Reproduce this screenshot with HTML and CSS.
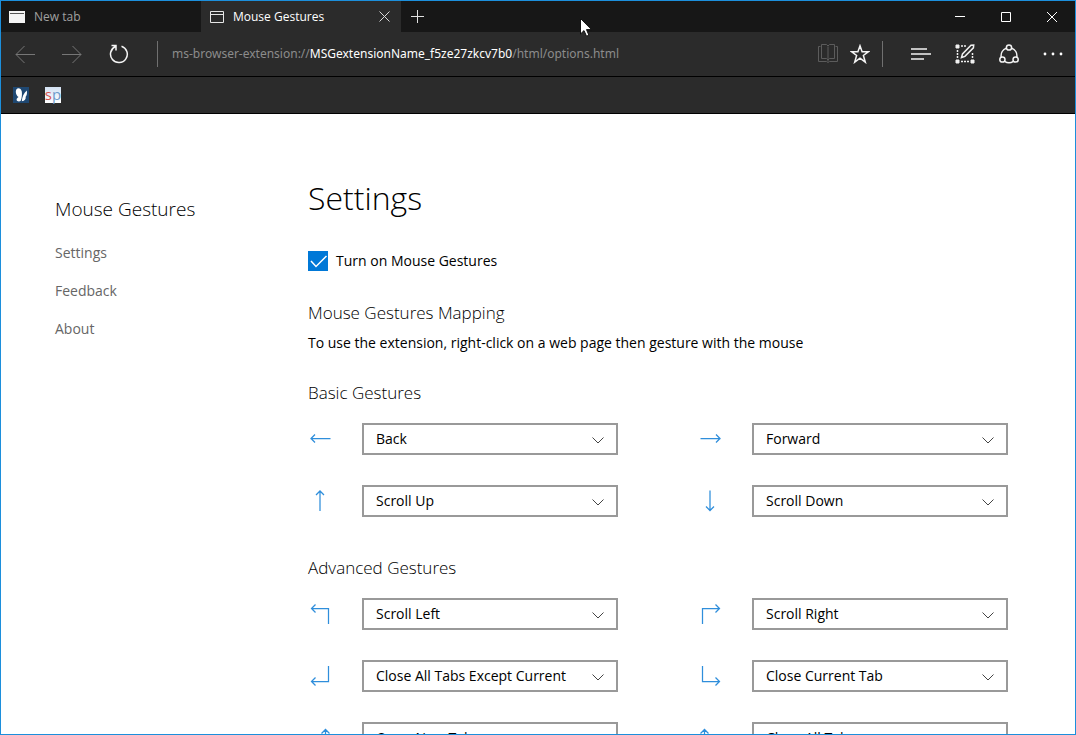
FILE: index.html
```html
<!DOCTYPE html>
<html lang="en">
<head>
<meta charset="utf-8">
<title>Mouse Gestures</title>
<link rel="stylesheet" href="styles.css">
</head>
<body>
<div class="window">
  <header class="tabbar">
    <button class="tab" type="button">
      <svg class="tab-icon" width="16" height="12" viewBox="0 0 16 12"><path fill="#f4f4f4" d="M0 0h16v12H0z"/><path stroke="#555" d="M1 2.5h14"/></svg>
      <span>New tab</span>
    </button>
    <div class="tab tab-active">
      <svg class="tab-icon" width="14" height="12" viewBox="0 0 14 12" fill="none" stroke="#e6e6e6"><path d="M.5.5h13v11H.5zM0 3.5h14"/></svg>
      <span>Mouse Gestures</span>
      <button class="icon-button tab-close" type="button" aria-label="Close tab">
        <svg width="11" height="11" viewBox="0 0 11 11" stroke="#d8d8d8"><path d="M.5.5l10 10M10.500.5l-10 10"/></svg>
      </button>
    </div>
    <button class="icon-button new-tab" type="button" aria-label="New tab">
      <svg width="13" height="13" viewBox="0 0 13 13" stroke="#e0e0e0"><path d="M6.500 0v13M0 6.500h13"/></svg>
    </button>
    <div class="window-controls">
      <button class="icon-button" type="button" aria-label="Minimize"><svg width="10" height="11" viewBox="0 0 10 11" stroke="#fff"><path d="M0 5.500h10"/></svg></button>
      <button class="icon-button" type="button" aria-label="Maximize"><svg width="10" height="10" viewBox="0 0 10 10" fill="none" stroke="#fff"><path d="M.5.5h9v9h-9z"/></svg></button>
      <button class="icon-button" type="button" aria-label="Close"><svg width="10" height="10" viewBox="0 0 10 10" stroke="#fff"><path d="M0 0l10 10M10 0L0 10"/></svg></button>
    </div>
  </header>

  <nav class="toolbar" aria-label="Browser">
    <div class="nav-buttons">
      <button class="icon-button" type="button" aria-label="Back"><svg width="20" height="18" viewBox="0 0 20 18" fill="none" stroke="#777"><path d="M20 9.500H1M9.500 1L1 9.500 9.500 18"/></svg></button>
      <button class="icon-button" type="button" aria-label="Forward"><svg width="20" height="18" viewBox="0 0 20 18" fill="none" stroke="#777"><path d="M0 9.500h19M10.500 1L19 9.500 10.500 18"/></svg></button>
      <button class="icon-button" type="button" aria-label="Refresh"><svg width="20" height="20" viewBox="0 0 20 20" fill="none" stroke="#f4f4f4" stroke-width="1.500"><path d="M12.500 2.200A8.400 8.400 0 1 1 6.500 2.500M2.500 1.500H7v5"/></svg></button>
    </div>
    <span class="divider"></span>
    <div class="address"><span>ms-browser-extension://</span><span class="host">MSGextensionName_f5ze27zkcv7b0</span><span>/html/options.html</span></div>
    <div class="page-buttons">
      <button class="icon-button" type="button" aria-label="Reading view"><svg width="20" height="19" viewBox="0 0 20 19" fill="none" stroke="#5c5c5c"><path d="M2.500 2.500h-2v15h8l1.500 1 1.500-1h8v-15h-2M10 2.500v15M3.500.5h5L10 2l1.500-1.500h5v14h-5L10 16l-1.500-1.500h-5z"/></svg></button>
      <button class="icon-button" type="button" aria-label="Add to favorites"><svg width="20" height="20" viewBox="0 0 20 20" fill="none" stroke="#f4f4f4" stroke-width="1.500"><path d="M10 1.800l2.100 5.900h6.300l-5 3.800 1.900 6.700-5.300-4-5.300 4 1.900-6.700-5-3.800h6.300z"/></svg></button>
    </div>
    <span class="divider"></span>
    <div class="tool-buttons">
      <button class="icon-button" type="button" aria-label="Hub"><svg width="20" height="12" viewBox="0 0 20 12" stroke="#f4f4f4" stroke-width="1.500"><path d="M0 1h16M0 6h20M0 11h13"/></svg></button>
      <button class="icon-button" type="button" aria-label="Make a web note"><svg width="20" height="20" viewBox="0 0 20 20" fill="none" stroke="#f0f0f0"><path fill="#f0f0f0" d="M1 1h3v3H1zM1 16h3v3H1zM16 16h3v3h-3z"/><path stroke-dasharray="2 1" stroke-width="1.500" d="M6 2h6M2.500 6v9M6 17.500h9M17.500 9v6"/><path stroke-width="1.500" d="M6.500 13.500l1-3.500L16 1.200l2.700-.2-.3 2.800-8.500 8.600z"/></svg></button>
      <button class="icon-button" type="button" aria-label="Share"><svg width="20" height="20" viewBox="0 0 20 20" fill="none" stroke="#f4f4f4" stroke-width="1.500"><circle cx="10" cy="3.500" r="2.600"/><circle cx="3.400" cy="15.500" r="2.600"/><circle cx="16.600" cy="15.500" r="2.600"/><path d="M7.300 4.300a8 8 0 0 0-5.100 8.700M12.700 4.300a8 8 0 0 1 5.100 8.700M5.600 17.300a8 8 0 0 0 8.800 0"/></svg></button>
      <button class="icon-button" type="button" aria-label="More"><svg width="20" height="4" viewBox="0 0 20 4" fill="#fff"><circle cx="2" cy="2" r="1.400"/><circle cx="10" cy="2" r="1.400"/><circle cx="18" cy="2" r="1.400"/></svg></button>
    </div>
  </nav>

  <div class="favorites">
    <a class="favorite" href="#" aria-label="Butterfly"><svg width="16" height="16" viewBox="0 0 16 16"><path fill="#1f4872" d="M0 0h16v16H0z"/><path fill="#fff" d="M3.500 2.200C5 .2 8.200 1.300 8.800 4.500c.3 2.200.2 4.700-.4 7.200L7.600 14c-1.600.9-4 .3-4-1.200 0-1.300.9-2 2-2.700C3.200 8.500 2 4.500 3.500 2.200z"/><path fill="#fff" d="M13.700 3.600c.7 2.500.2 5-1 6.200.2 2.400-.8 4.300-3.900 4.500.2-4.100 2-8 4.900-10.700z"/></svg></a>
    <a class="favorite favorite-sp" href="#"><span class="letter-s">s</span><span class="letter-p">p</span></a>
  </div>

  <div class="page">
    <aside class="sidebar">
      <h2 class="sidebar-title">Mouse Gestures</h2>
      <a href="#settings">Settings</a>
      <a href="#feedback">Feedback</a>
      <a href="#about">About</a>
    </aside>

    <main class="content">
      <h1 class="page-title">Settings</h1>
      <label class="toggle">
        <span class="checkbox">
          <input type="checkbox" checked>
          <svg width="20" height="20" viewBox="0 0 20 20" fill="none" stroke="#fff" stroke-width="1.500"><path d="M3 10l5 5.500L18.500 5"/></svg>
        </span>
        <span>Turn on Mouse Gestures</span>
      </label>

      <h2 class="section-title">Mouse Gestures Mapping</h2>
      <p class="hint">To use the extension, right-click on a web page then gesture with the mouse</p>

      <h3 class="group-title">Basic Gestures</h3>
      <div class="gestures">
        <label class="gesture">
          <svg class="arrow" viewBox="0 0 24 24"><path d="M22.500 11.500h-20M7 7.500l-4 4 4 4"/></svg>
          <span class="select"><select aria-label="Left"><option>Back</option></select><svg class="chevron" viewBox="0 0 12 7"><path d="M.5.5L6 6 11.500.5"/></svg></span>
        </label>
        <label class="gesture">
          <svg class="arrow" viewBox="0 0 24 24"><path d="M2.500 11.500h20M18 7.500l4 4-4 4"/></svg>
          <span class="select"><select aria-label="Right"><option>Forward</option></select><svg class="chevron" viewBox="0 0 12 7"><path d="M.5.5L6 6 11.500.5"/></svg></span>
        </label>
        <label class="gesture">
          <svg class="arrow" viewBox="0 0 24 24"><path d="M12 22V2M8 6l4-4 4 4"/></svg>
          <span class="select"><select aria-label="Up"><option>Scroll Up</option></select><svg class="chevron" viewBox="0 0 12 7"><path d="M.5.5L6 6 11.500.5"/></svg></span>
        </label>
        <label class="gesture">
          <svg class="arrow" viewBox="0 0 24 24"><path d="M12 1.500v20M8 17.500l4 4 4-4"/></svg>
          <span class="select"><select aria-label="Down"><option>Scroll Down</option></select><svg class="chevron" viewBox="0 0 12 7"><path d="M.5.5L6 6 11.500.5"/></svg></span>
        </label>
      </div>

      <h3 class="group-title">Advanced Gestures</h3>
      <div class="gestures">
        <label class="gesture">
          <svg class="arrow" viewBox="0 0 24 24"><path d="M20.500 22V6.500H4M7.500 2.500l-4 4 4 4"/></svg>
          <span class="select"><select aria-label="Up then left"><option>Scroll Left</option></select><svg class="chevron" viewBox="0 0 12 7"><path d="M.5.5L6 6 11.500.5"/></svg></span>
        </label>
        <label class="gesture">
          <svg class="arrow" viewBox="0 0 24 24"><path d="M4.500 22V6.500H21M17.500 2.500l4 4-4 4"/></svg>
          <span class="select"><select aria-label="Up then right"><option>Scroll Right</option></select><svg class="chevron" viewBox="0 0 12 7"><path d="M.5.5L6 6 11.500.5"/></svg></span>
        </label>
        <label class="gesture">
          <svg class="arrow" viewBox="0 0 24 24"><path d="M20.500 2v15.500H4M7.500 13.500l-4 4 4 4"/></svg>
          <span class="select"><select aria-label="Down then left"><option>Close All Tabs Except Current</option></select><svg class="chevron" viewBox="0 0 12 7"><path d="M.5.5L6 6 11.500.5"/></svg></span>
        </label>
        <label class="gesture">
          <svg class="arrow" viewBox="0 0 24 24"><path d="M4.500 2v15.500H21M17.500 13.500l4 4-4 4"/></svg>
          <span class="select"><select aria-label="Down then right"><option>Close Current Tab</option></select><svg class="chevron" viewBox="0 0 12 7"><path d="M.5.5L6 6 11.500.5"/></svg></span>
        </label>
        <label class="gesture">
          <svg class="arrow" viewBox="0 0 24 24"><path d="M2 19.500h15.500V4M13.500 7.500l4-4 4 4"/></svg>
          <span class="select"><select aria-label="Right then up"><option>Open New Tab</option></select><svg class="chevron" viewBox="0 0 12 7"><path d="M.5.5L6 6 11.500.5"/></svg></span>
        </label>
        <label class="gesture">
          <svg class="arrow" viewBox="0 0 24 24"><path d="M22 19.500H6.500V4M2.500 7.500l4-4 4 4"/></svg>
          <span class="select"><select aria-label="Left then up"><option>Close All Tabs</option></select><svg class="chevron" viewBox="0 0 12 7"><path d="M.5.5L6 6 11.500.5"/></svg></span>
        </label>
      </div>
    </main>
  </div>

  <svg class="pointer" width="12" height="19" viewBox="0 0 12 19"><path fill="#fff" stroke="#111" d="M.5.5v15.500l3.500-3.400 2.500 5.600 2.400-1-2.400-5.600h5z"/></svg>
</div>
</body>
</html>
```
FILE: styles.css
```css
* {
  box-sizing: border-box;
}

body {
  margin: 0;
  font-family: "Open Sans", "Noto Sans", sans-serif;
  font-size: 14px;
  line-height: 20px;
  color: #000;
  background: #fff;
}

h1, h2, h3, p {
  margin: 0;
}

button {
  border: 0;
  padding: 0;
  background: none;
  color: inherit;
  font: inherit;
}

svg {
  display: block;
  flex: none;
}

.window {
  position: relative;
  display: flex;
  flex-direction: column;
  height: 100vh;
  overflow: hidden;
  border: 1px solid #1c8fdc;
}

.icon-button {
  display: flex;
  align-items: center;
  justify-content: center;
}

/* Tab strip */
.tabbar {
  display: flex;
  flex: none;
  height: 31px;
  background: #171717;
  color: #a0a0a0;
  font-size: 12px;
}

.tab {
  display: flex;
  align-items: center;
  gap: 9px;
  width: 200px;
  padding: 0 8px;
}

.tab-active {
  padding: 0 9px;
  background: #2b2b2b;
  color: #fff;
}

.tab-close {
  margin-left: auto;
  width: 15px;
  height: 15px;
}

.new-tab {
  width: 33px;
}

.window-controls {
  display: flex;
  margin-left: auto;
}

.window-controls .icon-button {
  width: 46px;
}

/* Address row */
.toolbar {
  display: flex;
  flex: none;
  align-items: center;
  height: 45px;
  padding-bottom: 1px;
  background: #2b2b2b;
  border-bottom: 1px solid #000;
}

.nav-buttons {
  display: flex;
  width: 156px;
}

.nav-buttons .icon-button {
  width: 47px;
  height: 40px;
}

.divider {
  width: 1px;
  height: 26px;
  background: #707070;
}

.address {
  flex: 1;
  padding-left: 14px;
  font-family: "Noto Sans", "Open Sans", sans-serif;
  font-size: 12px;
  color: #8c8c8c;
  white-space: nowrap;
}

.host {
  color: #fff;
}

.page-buttons {
  display: flex;
  padding-right: 6px;
}

.page-buttons .icon-button {
  width: 32px;
  height: 32px;
}

.tool-buttons {
  display: flex;
  padding-left: 16px;
}

.tool-buttons .icon-button {
  width: 44px;
  height: 32px;
}

/* Favorites bar */
.favorites {
  display: flex;
  flex: none;
  align-items: center;
  gap: 16px;
  height: 37px;
  padding: 0 12px;
  background: #2b2b2b;
  border-bottom: 1px solid #000;
}

.favorite {
  display: flex;
  width: 16px;
  height: 16px;
  text-decoration: none;
}

.favorite-sp {
  justify-content: center;
  background: linear-gradient(#d3e2f4, #fff);
  font-size: 15px;
  line-height: 14px;
}

.letter-s {
  color: #d9534f;
}

.letter-p {
  color: #6d9bcb;
}

/* Options page */
.page {
  display: flex;
  flex: 1;
  min-height: 0;
  overflow: hidden;
}

.sidebar {
  display: flex;
  flex: none;
  flex-direction: column;
  gap: 20px;
  width: 307px;
  padding: 81px 20px 0 54px;
}

.sidebar a {
  color: #666;
  text-decoration: none;
}

.sidebar-title {
  font-size: 19px;
  font-weight: 300;
  line-height: 28px;
}

.sidebar a + a {
  margin-top: -2px;
}

.content {
  flex: 1;
  padding: 60px 67px 0 0;
}

.page-title {
  font-size: 32px;
  font-weight: 300;
  line-height: 48px;
}

.toggle {
  display: flex;
  align-items: center;
  gap: 8px;
  margin-top: 29px;
}

.checkbox {
  display: grid;
}

.checkbox input {
  grid-area: 1 / 1;
  width: 20px;
  height: 20px;
  margin: 0;
  appearance: none;
}

.checkbox input:checked {
  background: #0078d7;
}

.checkbox svg {
  grid-area: 1 / 1;
  visibility: hidden;
  pointer-events: none;
}

.checkbox input:checked + svg {
  visibility: visible;
}

.section-title,
.group-title {
  font-size: 17px;
  font-weight: 300;
  line-height: 24px;
}

.section-title {
  margin-top: 30px;
}

.hint {
  margin-top: 8px;
}

.hint + .group-title {
  margin-top: 28px;
}

.gestures + .group-title {
  margin-top: 39px;
}

.gestures {
  display: grid;
  grid-template-columns: 1fr 1fr;
  gap: 30px 80px;
  margin-top: 18px;
}

.gesture {
  display: flex;
  align-items: center;
  gap: 30px;
}

.arrow {
  width: 24px;
  height: 24px;
  fill: none;
  stroke: #2f8edb;
  stroke-width: 1.25px;
}

.select {
  display: grid;
  flex: 1;
  align-items: center;
}

.select select {
  grid-area: 1 / 1;
  width: 100%;
  height: 32px;
  padding: 0 32px 0 12px;
  border: 2px solid #999;
  border-radius: 0;
  appearance: none;
  background: #fff;
  color: #000;
  font: inherit;
}

.chevron {
  grid-area: 1 / 1;
  justify-self: end;
  width: 12px;
  height: 7px;
  margin: 3px 14px 0 0;
  fill: none;
  stroke: #444;
  pointer-events: none;
}

/* Mouse pointer above the window */
.pointer {
  position: absolute;
  top: 17px;
  left: 579px;
}
```
